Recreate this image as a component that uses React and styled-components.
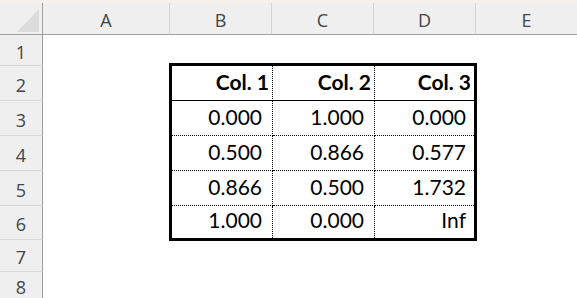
import React from 'react';
import styled, { createGlobalStyle } from 'styled-components';

const GlobalStyle = createGlobalStyle`
    html, body {
        margin: 0;
        padding: 0;
        background: #ffffff;
    }
    body {
        width: 577px;
        height: 298px;
        overflow: hidden;
    }
`

const Window = styled.div`
    width: 577px;
    height: 298px;
    display: flex;
    flex-direction: column;
    background: #ffffff;
    overflow: hidden;
`

const TopStrip = styled.div`
    height: 3px;
    flex-shrink: 0;
    background: #f6efea;
`

const Sheet = styled.div`
    flex-grow: 1;
    display: grid;
    grid-template-columns: 43px 127px 102px 102px 102px 1fr;
    grid-template-rows: 32px 31px 35px 35px 35px 35px 34px 32px 1fr;
`

const Corner = styled.div`
    grid-column: 1;
    grid-row: 1;
    background: #efefef;
    border-right: 1px solid #9f9f9f;
    border-bottom: 1px solid #9f9f9f;
    display: flex;
    align-items: flex-end;
    justify-content: flex-end;
    padding: 0 3px 2px 0;
`

const ColHeader = styled.div`
    grid-row: 1;
    background: #efefef;
    border-bottom: 1px solid #9f9f9f;
    border-right: ${props => props.last ? 'none' : '1px solid #d4d4d4'};
    display: flex;
    align-items: center;
    justify-content: center;
    padding-top: 3px;
    font-family: "Open Sans", "Noto Sans", sans-serif;
    font-size: 18px;
    color: #444444;
`

const RowHeader = styled.div`
    grid-column: 1;
    background: #efefef;
    border-right: 1px solid #9f9f9f;
    border-bottom: 1px solid #d8d8d8;
    display: flex;
    align-items: center;
    justify-content: center;
    padding-top: 3px;
    font-family: "Open Sans", "Noto Sans", sans-serif;
    font-size: 18px;
    color: #444444;
`

const Table = styled.div`
    grid-column: 3 / 6;
    grid-row: 3 / 8;
    margin: -3px -1px -1px -1px;
    border: 3px solid #000000;
    display: grid;
    grid-template-columns: 101px 102px 1fr;
    grid-template-rows: 35px 35px 35px 35px 1fr;
    font-family: Lato, "Liberation Sans", sans-serif;
    font-size: 21px;
    color: #000000;
`

const Cell = styled.div`
    display: flex;
    align-items: flex-end;
    justify-content: flex-end;
    line-height: 21px;
    padding-bottom: 8px;
    padding-right: ${props => props.head ? 3 : props.lastCol ? 8 : 10}px;
    font-weight: ${props => props.head ? 700 : 400};
    border-right: ${props => props.lastCol ? 'none' : '1px dotted #000000'};
    border-bottom: ${props => props.head ? '1px solid #000000' : props.lastRow ? 'none' : '1px dotted #000000'};
`

const columns = ['A', 'B', 'C', 'D', 'E'];
const rowNumbers = [1, 2, 3, 4, 5, 6, 7, 8];
const headings = ['Col. 1', 'Col. 2', 'Col. 3'];
const data = [
    ['0.000', '1.000', '0.000'],
    ['0.500', '0.866', '0.577'],
    ['0.866', '0.500', '1.732'],
    ['1.000', '0.000', 'Inf'],
];

const CornerMark = () => (
    <svg width="22" height="23" viewBox="0 0 22 23">
        <polygon points="22,0 22,23 0,23" fill="#dcdcdc" />
    </svg>
);

export default function App() {
    return (
        <Window>
            <GlobalStyle />
            <TopStrip />
            <Sheet>
                <Corner><CornerMark /></Corner>
                {columns.map((c, i) => (
                    <ColHeader key={c} style={{ gridColumn: i + 2 }} last={i === columns.length - 1}>{c}</ColHeader>
                ))}
                {rowNumbers.map((n) => (
                    <RowHeader key={n} style={{ gridRow: n + 1 }}>{n}</RowHeader>
                ))}
                <Table>
                    {headings.map((h, i) => (
                        <Cell key={h} head lastCol={i === 2}>{h}</Cell>
                    ))}
                    {data.map((row, r) => row.map((v, i) => (
                        <Cell key={r + '-' + i} lastCol={i === 2} lastRow={r === data.length - 1}>{v}</Cell>
                    )))}
                </Table>
            </Sheet>
        </Window>
    );
}
